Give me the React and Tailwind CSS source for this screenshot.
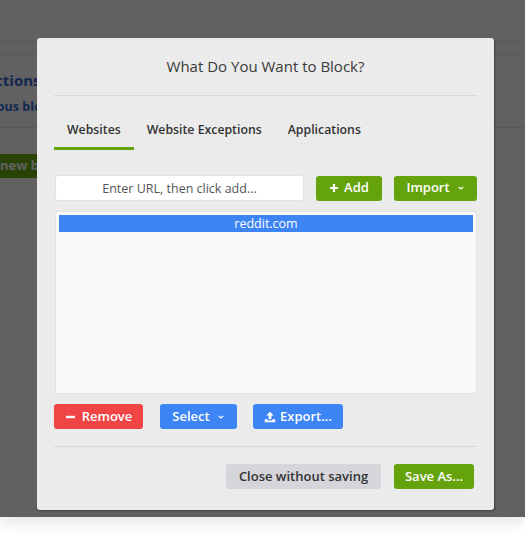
import React, { useState } from 'react';

const PlusIcon = () => (
  <svg width="10" height="10" viewBox="0 0 10 10" className="mr-[5px]">
    <path d="M5 1v8M1 5h8" stroke="currentColor" strokeWidth="2.2" />
  </svg>
);

const MinusIcon = () => (
  <svg width="11" height="10" viewBox="0 0 11 10" className="mr-[6px]">
    <path d="M1 5h9" stroke="currentColor" strokeWidth="2.4" />
  </svg>
);

const Chevron = () => (
  <svg width="8" height="6" viewBox="0 0 8 6" className="ml-[7px]">
    <path d="M1.8 2L4 4l2.2-2" fill="none" stroke="currentColor" strokeWidth="1.1" />
  </svg>
);

const UploadIcon = () => (
  <svg width="12" height="12" viewBox="0 0 12 12" className="mr-[4px]">
    <path d="M6 0.8L2.3 4.6h2.3v3.6h2.8V4.6h2.3z" fill="currentColor" />
    <path d="M0.8 8.2v3h10.4v-3H8.4v1.2H3.6V8.2z" fill="currentColor" />
  </svg>
);

const Btn = ({ color, className = '', children }) => (
  <button
    className={`h-[25px] flex items-center justify-center rounded-[3px] text-[13px] font-semibold ${color} ${className}`}
  >
    {children}
  </button>
);

const tabs = ['Websites', 'Website Exceptions', 'Applications'];

export default function App() {
  const [active, setActive] = useState(0);
  const [url, setUrl] = useState('');

  return (
    <div className="w-[525px] h-[558px] bg-white overflow-hidden" style={{ fontFamily: '"Open Sans", "Noto Sans", sans-serif' }}>
      <div className="relative h-[517px] bg-white overflow-hidden shadow-[0_6px_14px_rgba(0,0,0,0.10)]">
        {/* page behind the overlay */}
        <div className="h-[42px] border-b border-[#e6e6e6]" />
        <div className="h-[13px] border-b border-[#e6e6e6]" />
        <div className="h-[73px] border-b border-[#e6e6e6] pt-[14px]">
          <div className="-ml-[49px] text-[15px] font-bold text-[#3466d6] leading-[22px]">Restrictions</div>
          <div className="-ml-[35px] mt-[7px] text-[12.5px] font-bold text-[#3466d6] leading-[18px]">Previous blocks</div>
        </div>
        <div className="pt-[26px]">
          <div className="-ml-[40px] w-[120px] h-[24px] bg-[#6cae12] text-white text-[13px] font-bold flex items-center pl-[40px]">new block</div>
        </div>

        {/* overlay */}
        <div className="absolute inset-0 bg-black/[0.62]" />

        {/* modal */}
        <div className="absolute left-[37px] top-[38px] w-[457px] h-[472px] bg-[#ebebeb] rounded-[3px] shadow-[1px_1px_2px_rgba(0,0,0,0.35)] px-[17px]">
          <div className="h-[58px] flex items-center justify-center text-[15px] text-[#3a3a3a] border-b border-[#d8d8d8]">
            What Do You Want to Block?
          </div>

          <div className="flex mt-[24px]">
            {tabs.map((t, i) => (
              <button
                key={t}
                onClick={() => setActive(i)}
                className={`px-[13px] pb-[7px] text-[12.3px] leading-[20px] font-semibold text-[#333] border-b-[3px] ${
                  active === i ? 'border-[#65a30d]' : 'border-transparent'
                }`}
              >
                {t}
              </button>
            ))}
          </div>

          <div className="flex items-center mt-[25px]">
            <input
              value={url}
              onChange={(e) => setUrl(e.target.value)}
              placeholder="Enter URL, then click add..."
              className="w-[249px] h-[26px] ml-[1px] bg-white border border-[#e2e2e2] rounded-[3px] text-center text-[12.5px] text-[#444] placeholder:text-[#555] outline-none"
            />
            <Btn color="bg-[#65a30d] text-white" className="w-[66px] ml-[12px]">
              <PlusIcon />
              Add
            </Btn>
            <Btn color="bg-[#65a30d] text-white" className="w-[83px] ml-[12px]">
              Import
              <Chevron />
            </Btn>
          </div>

          <div className="mt-[10px] ml-[1px] w-[422px] h-[183px] bg-[#fafafa] border border-[#e2e2e2] rounded-[3px] p-[3px]">
            <div className="h-[17px] bg-[#3d84f5] text-white text-[12.5px] leading-[17px] text-center">reddit.com</div>
          </div>

          <div className="flex mt-[10px]">
            <Btn color="bg-[#f04545] text-white" className="w-[89px]">
              <MinusIcon />
              Remove
            </Btn>
            <Btn color="bg-[#3d84f5] text-white" className="w-[77px] ml-[17px]">
              Select
              <Chevron />
            </Btn>
            <Btn color="bg-[#3d84f5] text-white" className="w-[90px] ml-[16px]">
              <UploadIcon />
              Export...
            </Btn>
          </div>

          <div className="mt-[17px] border-t border-[#d8d8d8]" />

          <div className="flex justify-end mt-[17px] pr-[3px]">
            <Btn color="bg-[#d5d5da] text-[#333]" className="w-[155px]">
              Close without saving
            </Btn>
            <Btn color="bg-[#65a30d] text-white" className="w-[80px] ml-[13px]">
              Save As...
            </Btn>
          </div>
        </div>
      </div>
    </div>
  );
}
